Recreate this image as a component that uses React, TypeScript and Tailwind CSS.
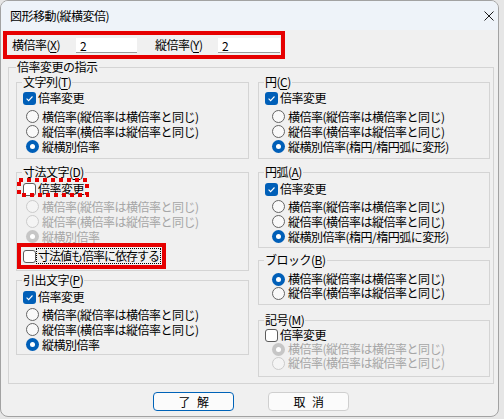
import type { ReactNode } from "react";

const FONT = "font-['Noto_Sans_CJK_JP','Noto_Sans',sans-serif]";

const Mn = ({ pre, k }: { pre: string; k: string }) => (
  <>
    {pre}
    <span className="underline underline-offset-[2px]">{k}</span>)
  </>
);

const Box = ({ checked }: { checked?: boolean }) =>
  checked ? (
    <span className="w-[13px] h-[13px] rounded-[3px] bg-[#005fb8] flex items-center justify-center shrink-0">
      <svg width="9" height="9" viewBox="0 0 9 9">
        <path d="M1.6 4.7 L3.6 6.6 L7.5 2.5" stroke="white" strokeWidth="1.1" fill="none" />
      </svg>
    </span>
  ) : (
    <span className="w-[13px] h-[13px] rounded-[3px] border border-[#5c5c5c] bg-white shrink-0" />
  );

const Dot = ({ on, off }: { on?: boolean; off?: boolean }) => {
  if (on)
    return (
      <span
        className={`w-[13px] h-[13px] rounded-full flex items-center justify-center shrink-0 ${
          off ? "bg-[#c6c6c6]" : "bg-[#005fb8]"
        }`}
      >
        <span className="w-[5px] h-[5px] rounded-full bg-white" />
      </span>
    );
  return (
    <span
      className={`w-[13px] h-[13px] rounded-full border shrink-0 ${
        off ? "border-[#cbcbcb] bg-[#f4f4f4]" : "border-[#646464] bg-[#f9f9f9]"
      }`}
    />
  );
};

const CheckRow = ({ checked, className }: { checked?: boolean; className: string }) => (
  <div className={`flex items-center gap-[2px] pl-[6px] ${className}`}>
    <Box checked={checked} />
    <span>倍率変更</span>
  </div>
);

const RadioRow = ({
  on,
  off,
  text,
  className,
}: {
  on?: boolean;
  off?: boolean;
  text: string;
  className: string;
}) => (
  <div className={`flex items-center gap-[3px] ${className}`}>
    <Dot on={on} off={off} />
    <span className={off ? "text-[#a6a6a6]" : ""}>{text}</span>
  </div>
);

const Group = ({ title, className, children }: { title: ReactNode; className: string; children: ReactNode }) => (
  <fieldset className={`border border-[#d4d4d4] ${className}`}>
    <legend className="ml-[5px] px-[1px]">{title}</legend>
    {children}
  </fieldset>
);

const H = "横倍率(縦倍率は横倍率と同じ)";
const V = "縦倍率(横倍率は縦倍率と同じ)";

export default function App() {
  return (
    <div className={`w-[504px] h-[419px] bg-[#e6e6e6] text-[12px] leading-[14px] tracking-[-0.5px] text-black whitespace-nowrap ${FONT}`}>
      <div className="w-[499px] h-[417px] border border-[#a2a2a2] rounded-[8px] bg-[#f0f0f0] overflow-hidden flex flex-col">
        <div className="h-[29px] shrink-0 bg-[#eef3f9] flex items-center justify-between pl-[9px] pr-[4px]">
          <span>図形移動(縦横変倍)</span>
          <svg width="10" height="10" viewBox="0 0 10 10">
            <path d="M0.5 0.5 L9.5 9.5 M9.5 0.5 L0.5 9.5" stroke="#1a1a1a" strokeWidth="1" />
          </svg>
        </div>

        <div className="mt-[1px] ml-[2px] w-[282px] h-[28px] border-4 border-[#e60000] flex items-center pl-[5px]">
          <span className="w-[64px]">
            <Mn pre="横倍率(" k="X" />
          </span>
          <div className="w-[61px] h-[15px] bg-white border-b border-[#9a9a9a] pl-[4px] leading-[15px]">2</div>
          <span className="ml-[18px] w-[63px]">
            <Mn pre="縦倍率(" k="Y" />
          </span>
          <div className="w-[62px] h-[15px] bg-white border-b border-[#9a9a9a] pl-[4px] leading-[15px]">2</div>
        </div>

        <fieldset className="mt-[1px] ml-[7px] w-[486px] border border-[#d4d4d4] pl-[7px] pr-[3px] pb-[6px]">
          <legend className="px-[1px]">倍率変更の指示</legend>
          <div className="flex gap-[9px] pt-[1px] items-start">
            <div className="w-[233px] flex flex-col">
              <Group title={<Mn pre="文字列(" k="T" />} className="pb-[4px]">
                <CheckRow checked className="mt-[1px] h-[16px]" />
                <div className="mt-[3px] pl-[9px]">
                  <RadioRow text={H} className="h-[15px]" />
                  <RadioRow text={V} className="h-[15px]" />
                  <RadioRow on text="縦横別倍率" className="h-[15px]" />
                </div>
              </Group>

              <Group title={<Mn pre="寸法文字(" k="D" />} className="mt-[6px] pb-[1px]">
                <div className="relative mt-[2px]">
                  <CheckRow className="h-[16px]" />
                  <svg className="absolute left-0 top-[-3px]" width="72" height="19" viewBox="0 0 72 19">
                    <rect x="2" y="2" width="68" height="15" fill="none" stroke="#e60000" strokeWidth="4" strokeDasharray="4 4" />
                  </svg>
                </div>
                <div className="mt-[2px] pl-[9px]">
                  <RadioRow off text={H} className="h-[15px]" />
                  <RadioRow off text={V} className="h-[15px]" />
                  <RadioRow off on text="縦横別倍率" className="h-[15px]" />
                </div>
                <div className="mt-[-1px] h-[26px] w-[149px] border-4 border-[#e60000] flex items-center pl-[2px]">
                  <Box />
                  <span className="h-[16px] tracking-[-1px] border border-dotted border-black pl-[1px] pr-[1px]">
                    寸法値も倍率に依存する
                  </span>
                </div>
              </Group>

              <Group title={<Mn pre="引出文字(" k="P" />} className="mt-[2px] pb-[2px]">
                <CheckRow checked className="mt-[2px] h-[16px]" />
                <div className="mt-[2px] pl-[9px]">
                  <RadioRow text={H} className="h-[15px]" />
                  <RadioRow text={V} className="h-[15px]" />
                  <RadioRow on text="縦横別倍率" className="h-[15px]" />
                </div>
              </Group>
            </div>

            <div className="w-[232px] flex flex-col">
              <Group title={<Mn pre="円(" k="C" />} className="pb-[4px]">
                <CheckRow checked className="mt-[1px] h-[16px]" />
                <div className="mt-[3px] pl-[13px]">
                  <RadioRow text={H} className="h-[15px]" />
                  <RadioRow text={V} className="h-[15px]" />
                  <RadioRow on text="縦横別倍率(楕円/楕円弧に変形)" className="h-[15px]" />
                </div>
              </Group>

              <Group title={<Mn pre="円弧(" k="A" />} className="mt-[6px] pb-[3px]">
                <CheckRow checked className="mt-[2px] h-[16px]" />
                <div className="mt-[2px] pl-[13px]">
                  <RadioRow text={H} className="h-[15px]" />
                  <RadioRow text={V} className="h-[15px]" />
                  <RadioRow on text="縦横別倍率(楕円/楕円弧に変形)" className="h-[15px]" />
                </div>
              </Group>

              <Group title={<Mn pre="ブロック(" k="B" />} className="mt-[5px] pb-[4px]">
                <div className="mt-[5px] pl-[13px]">
                  <RadioRow on text={H} className="h-[14px]" />
                  <RadioRow text={V} className="h-[14px]" />
                </div>
              </Group>

              <Group title={<Mn pre="記号(" k="M" />} className="mt-[8px] pb-[6px]">
                <CheckRow className="mt-[1px] h-[14px]" />
                <div className="pl-[13px]">
                  <RadioRow off on text={H} className="h-[14px]" />
                  <RadioRow off text={V} className="h-[14px]" />
                </div>
              </Group>
            </div>
          </div>
        </fieldset>

        <div className="mt-[8px] flex justify-center gap-[34px] pl-[3px]">
          <button className="w-[81px] h-[19px] rounded-[4px] border border-[#0063b8] bg-[#fbfbfb] flex items-center justify-center gap-[7px]">
            <span>了</span>
            <span>解</span>
          </button>
          <button className="w-[81px] h-[19px] rounded-[4px] border border-[#cfcfcf] bg-[#fbfbfb] flex items-center justify-center gap-[7px]">
            <span>取</span>
            <span>消</span>
          </button>
        </div>
      </div>
    </div>
  );
}
